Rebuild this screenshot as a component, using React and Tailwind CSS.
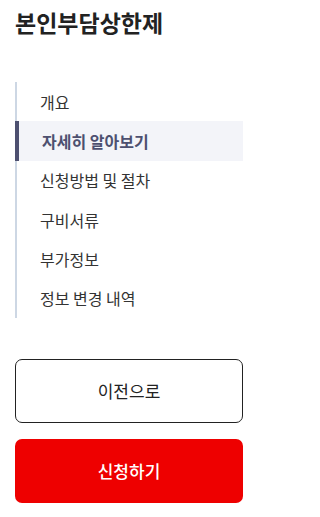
import React from 'react';

const menuItems = ['개요', '자세히 알아보기', '신청방법 및 절차', '구비서류', '부가정보', '정보 변경 내역'];

const App = () => {
    const active = 1;

    return (
        <div className="w-[258px] min-h-[517px] bg-white px-[15px] pt-[6px]" style={{ fontFamily: '"Noto Sans CJK KR", "Noto Sans", sans-serif' }}>
            <h1 className="text-[23px] leading-[33px] font-bold text-[#222222]">본인부담상한제</h1>

            <ul className="mt-[43px] border-l-2 border-[#cdd7e4]">
                {menuItems.map((item, index) => (
                    <li
                        key={index}
                        className={
                            index === active
                                ? 'h-[39.3px] flex items-center pl-[23px] -ml-[2px] border-l-4 border-[#4d5070] bg-[#f3f4f9] text-[16px] font-bold text-[#4d5070]'
                                : 'h-[39.3px] flex items-center pl-[23px] text-[16px] text-[#333333]'
                        }
                    >
                        {item}
                    </li>
                ))}
            </ul>

            <div className="mt-[41px] flex flex-col gap-4">
                <button className="h-[64px] w-full rounded-[7px] border border-[#222222] bg-white text-[17px] text-[#222222]">
                    이전으로
                </button>
                <button className="h-[64px] w-full rounded-[7px] bg-[#ee0000] text-[17px] font-medium text-white">
                    신청하기
                </button>
            </div>
        </div>
    );
};

export default App;
